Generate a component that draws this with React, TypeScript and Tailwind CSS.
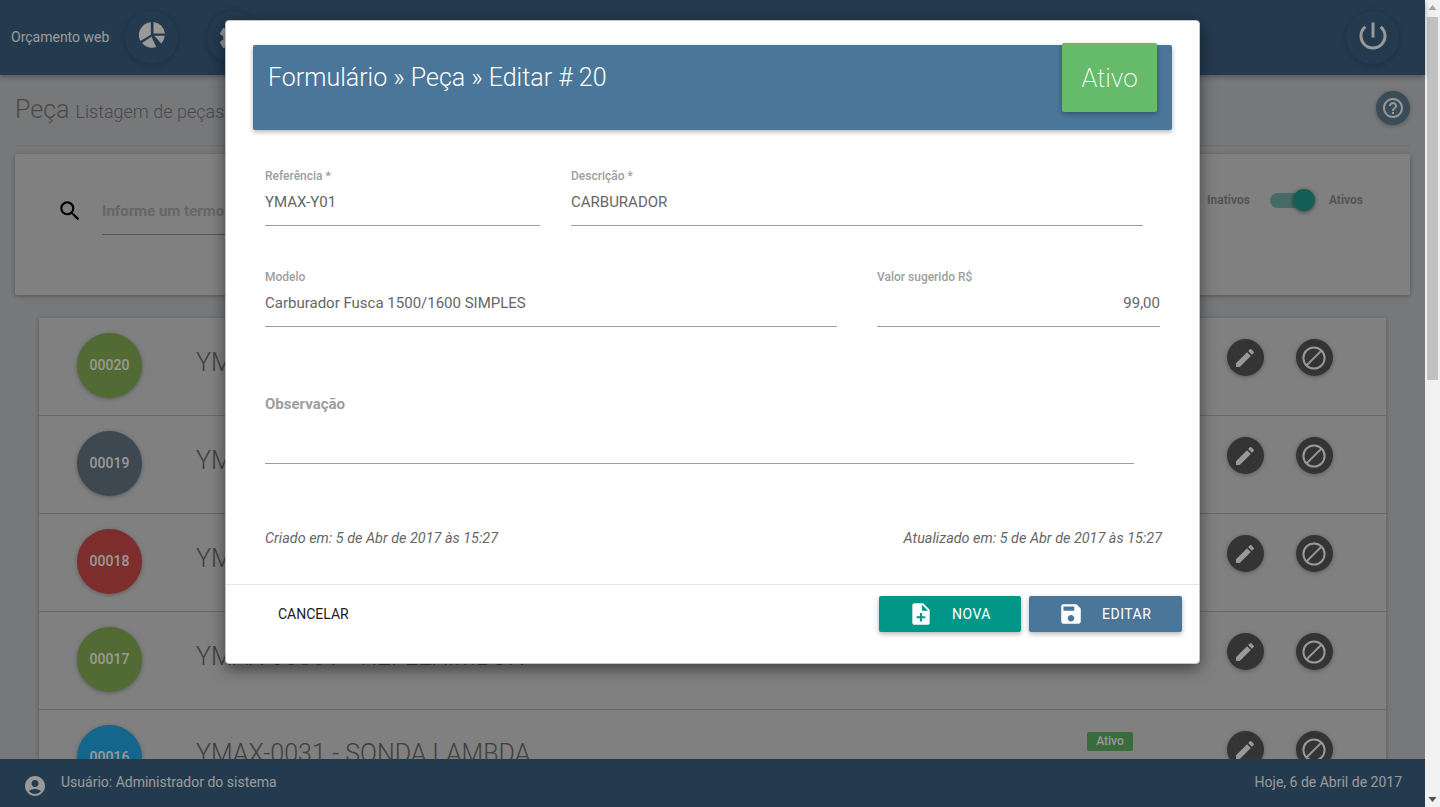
import { MdSearch, MdEdit, MdAccountCircle, MdSave, MdNoteAdd, MdHelpOutline, MdPowerSettingsNew, MdSettings } from "react-icons/md";

const rows = [
  { id: "00020", color: "bg-[#89b258]", text: "YMAX-Y01 - CARBURADOR", top: "mt-[27px]" },
  { id: "00019", color: "bg-[#667885]", text: "YMAX-0033 - BOMBA DE COMBUSTIVEL", top: "mt-[27px]" },
  { id: "00018", color: "bg-[#d04b48]", text: "YMAX-0032 - VELA DE IGNICAO", top: "mt-[27px]" },
  { id: "00017", color: "bg-[#89b258]", text: "YMAX-0030V - REFLEXIMBOR", top: "mt-[27px]" },
  { id: "00016", color: "bg-[#22aae9]", text: "YMAX-0031 - SONDA LAMBDA", top: "mt-[26px]" },
];

function TopButton({ className, children }: { className: string; children: React.ReactNode }) {
  return (
    <div className={`flex h-[53px] w-[53px] shrink-0 items-center justify-center rounded-full bg-[#3c6184] shadow-[0_1px_6px_rgba(0,0,0,0.2)] ${className}`}>
      {children}
    </div>
  );
}

function Field({ label, value, className, right }: { label: string; value: string; className: string; right?: boolean }) {
  return (
    <div className={`h-[56px] border-b border-[#9e9e9e] ${className}`}>
      <div className="text-[12px] leading-[12px] font-medium text-[#9e9e9e]">{label}</div>
      <div className={`mt-[9px] text-[15px] leading-[22px] text-[#666666] ${right ? "text-right" : ""}`}>{value}</div>
    </div>
  );
}

export default function App() {
  return (
    <div className="flex h-screen overflow-hidden bg-[#f1f1f1] font-['Roboto',sans-serif]">
      <div className="relative flex h-full w-[1425px] flex-col bg-[#c6c8cb]">
        <header className="flex h-[75px] shrink-0 items-center bg-[#3c6184] shadow-[0_2px_5px_rgba(0,0,0,0.3)]">
          <span className="ml-[11px] w-[114px] shrink-0 text-[14px] text-white">Orçamento web</span>
          <TopButton className="">
            <svg viewBox="0 0 77 77" className="mb-[6px] h-[26px] w-[26px] fill-white">
              <path d="M43 0A38 38 0 0 1 77 34L43 34Z" />
              <path d="M45 41L76 41A38 38 0 0 1 66 64Z" />
              <path d="M37 44L51 74A38 38 0 0 1 9 62Z" />
              <path d="M35 .5V38L4 56A38 38 0 0 1 35 .5Z" />
            </svg>
          </TopButton>
          <TopButton className="ml-[29px]">
            <MdSettings className="h-[36px] w-[36px] text-white" />
          </TopButton>
          <div className="flex-1" />
          <TopButton className="mr-[26px]">
            <MdPowerSettingsNew className="mb-[4px] h-[36px] w-[36px] text-white" />
          </TopButton>
        </header>

        <main className="min-h-0 flex-1 overflow-hidden px-[15px]">
          <div className="flex h-[71px] items-start justify-between border-b border-[#b9bbbf]">
            <div className="mt-[20px] flex items-baseline text-[#7b7b7b]">
              <span className="text-[25px] leading-[30px] font-light">Peça</span>
              <span className="ml-[6px] text-[18px] font-light">Listagem de peças</span>
            </div>
            <div className="mt-[16px] flex h-[34px] w-[34px] items-center justify-center rounded-full bg-[#617f93] shadow-[0_1px_4px_rgba(0,0,0,0.3)]">
              <MdHelpOutline className="h-[24px] w-[24px] text-white" />
            </div>
          </div>

          <section className="mt-[8px] flex h-[141px] rounded-[2px] bg-[#d5d5d5] pt-[36px] shadow-[0_1px_4px_rgba(0,0,0,0.3)]">
            <MdSearch className="mt-[8px] ml-[42px] h-[26px] w-[26px] text-black" />
            <div className="ml-[19px] h-[45px] w-[500px] border-b border-[#8e8e8e] pt-[10px] text-[15px] font-bold text-[#aaaaaa]">
              Informe um termo para pesquisar
            </div>
            <div className="flex-1" />
            <div className="flex h-[20px] items-center text-[12px] font-bold text-[#8e8e8e]">
              <span>Inativos</span>
              <div className="relative ml-[20px] h-[15px] w-[44px] rounded-full bg-[#75b2aa]">
                <div className="absolute top-[-4px] right-[-1px] h-[22px] w-[22px] rounded-full bg-[#239d8e] shadow-[0_1px_4px_rgba(0,0,0,0.5)]" />
              </div>
              <span className="mr-[47px] ml-[15px]">Ativos</span>
            </div>
          </section>

          <div className="mx-[24px] mt-[23px] bg-[#d5d5d5] shadow-[0_1px_4px_rgba(0,0,0,0.3)]">
            {rows.map((r, i) => (
              <div key={r.id} className="flex h-[98px] border-b border-[#b0b0b0]">
                <div className={`mt-[15px] ml-[38px] flex h-[65px] w-[65px] items-center justify-center rounded-full text-[14px] font-medium text-white shadow-[0_1px_4px_rgba(0,0,0,0.3)] ${r.color}`}>
                  {r.id}
                </div>
                <div className={`ml-[54px] w-[891px] text-[25px] leading-[36px] font-light text-[#6b6b6b] ${r.top}`}>{r.text}</div>
                <div className="mt-[22px] w-[46px] shrink-0">
                  {i === 4 && (
                    <span className="block h-[19px] rounded-[2px] bg-[#61b264] text-center text-[12px] leading-[19px] font-medium text-white">Ativo</span>
                  )}
                </div>
                <div className="mt-[21px] ml-[94px] flex h-[37px] w-[37px] items-center justify-center rounded-full bg-[#585858] shadow-[0_1px_4px_rgba(0,0,0,0.3)]">
                  <MdEdit className="mr-[1px] h-[24px] w-[24px] text-white" />
                </div>
                <div className="mt-[21px] ml-[32px] flex h-[37px] w-[37px] items-center justify-center rounded-full bg-[#585858] shadow-[0_1px_4px_rgba(0,0,0,0.3)]">
                  <svg viewBox="0 0 24 24" className="mr-[1px] h-[24px] w-[24px] fill-none stroke-white stroke-2">
                    <circle cx="12" cy="12" r="10.6" />
                    <path d="M4.6 19.4L19.4 4.6" />
                  </svg>
                </div>
              </div>
            ))}
          </div>
        </main>

        <footer className="flex h-[48px] shrink-0 items-center justify-between bg-[#3c6184] text-[14px] text-white">
          <div className="flex items-center">
            <MdAccountCircle className="mt-[6px] ml-[23px] h-[24px] w-[24px]" />
            <span className="mb-[1px] ml-[14px]">Usuário: Administrador do sistema</span>
          </div>
          <span className="mr-[23px] mb-[1px]">Hoje, 6 de Abril de 2017</span>
        </footer>

        <div className="absolute inset-0 bg-black/40" />

        <div className="absolute top-[20px] left-[225px] flex h-[644px] w-[975px] flex-col rounded-[4px] border border-[#c4c4c4] bg-white shadow-[0_5px_15px_rgba(0,0,0,0.5)]">
          <div className="relative mx-[27px] mt-[24px] h-[85px] shrink-0 rounded-[2px] bg-[#4a7699] pt-[16px] pl-[15px] text-[25px] leading-[34px] font-light text-white shadow-[0_2px_5px_rgba(0,0,0,0.3)]">
            Formulário » Peça » Editar # 20
            <div className="absolute top-[-2px] right-[15px] flex h-[69px] w-[95px] items-center justify-center rounded-[2px] bg-[#66bb6a] text-[26px] font-extralight shadow-[0_2px_5px_rgba(0,0,0,0.3)]">
              Ativo
            </div>
          </div>

          <div className="mt-[40px] ml-[39px] flex">
            <Field label="Referência *" value="YMAX-Y01" className="w-[275px]" />
            <Field label="Descrição *" value="CARBURADOR" className="ml-[31px] w-[572px]" />
          </div>
          <div className="mt-[45px] ml-[39px] flex">
            <Field label="Modelo" value="Carburador Fusca 1500/1600 SIMPLES" className="w-[572px]" />
            <Field label="Valor sugerido R$" value="99,00" right className="ml-[40px] w-[283px]" />
          </div>
          <div className="mt-[67px] ml-[39px] h-[70px] w-[869px] border-b border-[#9e9e9e] text-[15px] leading-[20px] font-bold text-[#9e9e9e]">
            Observação
          </div>
          <div className="mt-[65px] ml-[39px] flex w-[897px] justify-between text-[14.4px] leading-[20px] text-[#666666] italic">
            <span>Criado em: 5 de Abr de 2017 às 15:27</span>
            <span>Atualizado em: 5 de Abr de 2017 às 15:27</span>
          </div>
          <div className="mt-[35px] flex flex-1 items-start border-t border-[#e5e5e5] pt-[11px]">
            <span className="ml-[52px] text-[14px] leading-[36px] text-[#212121]">CANCELAR</span>
            <div className="flex-1" />
            <button className="flex h-[36px] w-[142px] items-center rounded-[2px] bg-[#009688] pl-[29px] text-[14px] tracking-[0.5px] text-white shadow-[0_2px_5px_rgba(0,0,0,0.3)]">
              <MdNoteAdd className="h-[26px] w-[26px]" />
              <span className="ml-[18px]">NOVA</span>
            </button>
            <button className="mr-[17px] ml-[8px] flex h-[36px] w-[153px] items-center rounded-[2px] bg-[#4a7699] pl-[29px] text-[14px] tracking-[0.5px] text-white shadow-[0_2px_5px_rgba(0,0,0,0.3)]">
              <MdSave className="h-[26px] w-[26px]" />
              <span className="ml-[18px]">EDITAR</span>
            </button>
          </div>
        </div>
      </div>

      <div className="flex h-full w-[15px] flex-col items-center bg-[#f1f1f1]">
        <svg viewBox="0 0 15 17" className="h-[17px] w-[15px] shrink-0 fill-[#a3a3a3]"><path d="M7.5 5 L11.5 10 H3.5 Z" /></svg>
        <div className="h-[363px] w-[11px] bg-[#c1c1c1]" />
        <div className="flex-1" />
        <svg viewBox="0 0 15 17" className="h-[17px] w-[15px] shrink-0 fill-[#505050]"><path d="M7.5 12 L3.5 7 H11.5 Z" /></svg>
      </div>
    </div>
  );
}
